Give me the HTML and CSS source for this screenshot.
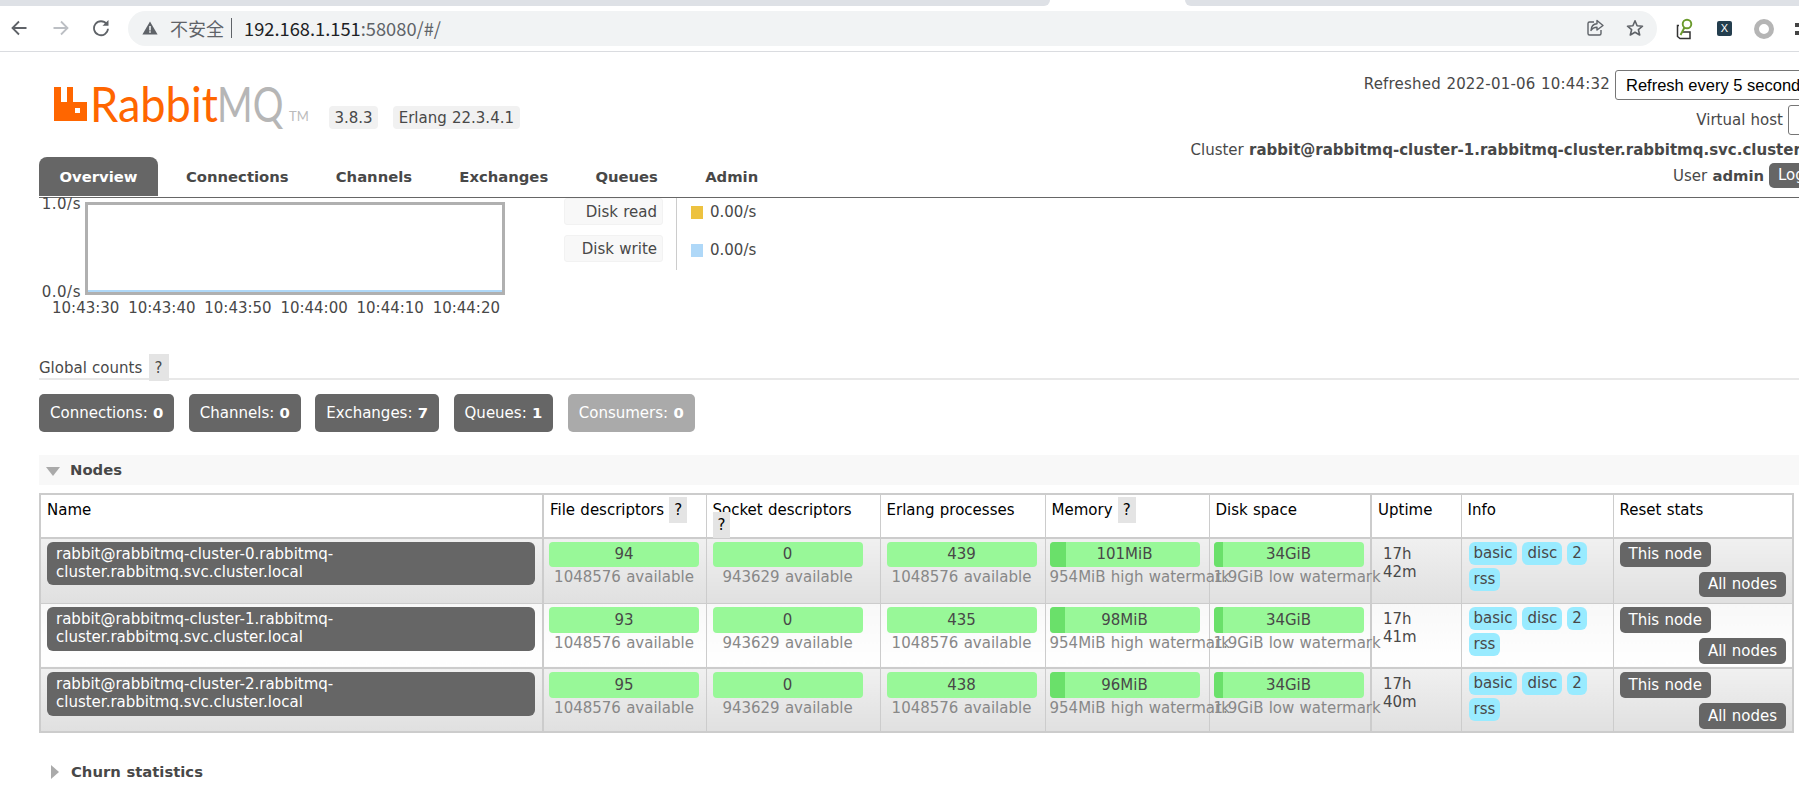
FILE: index.html
```html
<!DOCTYPE html>
<html lang="en">
<head>
<meta charset="utf-8">
<title>RabbitMQ Management</title>
<link rel="stylesheet" href="styles.css">
</head>
<body>
<div class="tabstrip"><div class="strip-left"></div><div class="strip-active"></div><div class="strip-right"></div></div>
<div class="toolbar">
  <svg class="tool back" viewBox="0 0 18 18"><path d="M16.5 9H2.5M9 2.5L2.5 9L9 15.5" fill="none" stroke="#5f6368" stroke-width="1.8"/></svg>
  <svg class="tool fwd" viewBox="0 0 18 18"><path d="M1.5 9H15.5M9 2.5L15.5 9L9 15.5" fill="none" stroke="#bcbfc4" stroke-width="1.8"/></svg>
  <svg class="tool reload" viewBox="0 0 18 18"><path d="M14.6 5A7 7 0 1 0 16 9.8" fill="none" stroke="#5f6368" stroke-width="1.8"/><path d="M10.5 6.8H16.5V1z" fill="#5f6368"/></svg>
  <div class="omnibox">
    <svg class="warn" viewBox="0 0 16 14"><path d="M8 0.5L15.6 13.5H0.4z" fill="#5f6368"/><path d="M7.2 5h1.6v4.4H7.2zM7.2 10.2h1.6v1.6H7.2z" fill="#f1f3f4"/></svg>
    <span class="insecure">不安全</span><span class="sep"></span>
    <span class="url">192.168.1.151<span class="url-dim">:58080/#/</span></span>
    <svg class="share" viewBox="0 0 18 18"><path d="M8 3H3.5A1.5 1.5 0 0 0 2 4.500V14.500A1.500 1.500 0 0 0 3.500 16H13.500A1.500 1.500 0 0 0 15 14.500V11" fill="none" stroke="#5f6368" stroke-width="1.4"/><path d="M11 1.500L17 6.500L11 11V8.200C8 8.200 6.200 9.200 5 11.500C5.200 7.800 7.500 5 11 4.800z" fill="none" stroke="#5f6368" stroke-width="1.400" stroke-linejoin="round"/></svg>
    <svg class="star" viewBox="0 0 18 18"><path d="M9 1.800L11.100 6.800L16.500 7.200L12.400 10.700L13.700 16L9 13.200L4.300 16L5.600 10.700L1.500 7.200L6.900 6.800z" fill="none" stroke="#5f6368" stroke-width="1.600" stroke-linejoin="round"/></svg>
  </div>
  <svg class="ext ext-key" viewBox="0 0 18 22"><path d="M3 7.500H1.500V18.500L4 20.500H14V14H6" fill="none" stroke="#333" stroke-width="1.500"/><circle cx="11" cy="6" r="4.300" fill="none" stroke="#6a9a2c" stroke-width="1.900"/><path d="M8.500 9.500L4.500 17" stroke="#6a9a2c" stroke-width="1.900"/></svg>
  <div class="ext-x">X</div>
  <div class="ext-ring"></div>
  <div class="kebab"><i></i><i></i></div>
</div>

<div class="page">
  <header class="header">
    <div class="header-left">
      <div class="logo">
        <svg class="logo-mark" viewBox="0 0 33 34"><path fill-rule="evenodd" d="M0 0H7V15H13V0H19V15H33V34H0zM21 21V26H26V21z" fill="#ff6600"/></svg>
        <span class="logo-rabbit">Rabbit</span><span class="logo-mq">MQ</span><span class="logo-tm">TM</span>
        <span class="badge badge-first">3.8.3</span>
        <span class="badge">Erlang 22.3.4.1</span>
      </div>
      <nav class="tabs">
        <a class="tab tab-on">Overview</a>
        <a class="tab">Connections</a>
        <a class="tab">Channels</a>
        <a class="tab">Exchanges</a>
        <a class="tab">Queues</a>
        <a class="tab">Admin</a>
      </nav>
    </div>
    <div class="header-right">
      <div class="hline hline-refresh">Refreshed 2022-01-06 10:44:32
        <select class="sel sel-refresh"><option>Refresh every 5 seconds</option></select>
      </div>
      <div class="hline hline-vhost">Virtual host
        <select class="sel sel-vhost"><option>All</option></select>
      </div>
      <div class="hline hline-cluster"><span>Cluster <b>rabbit@rabbitmq-cluster-1.rabbitmq-cluster.rabbitmq.svc.cluster.local</b></span></div>
      <div class="hline hline-user"><span>User <b>admin</b></span> <span class="logout">Log out</span></div>
    </div>
  </header>

  <section class="rates">
    <div class="chart">
      <div class="plot-row">
        <div class="yaxis"><span>1.0/s</span><span>0.0/s</span></div>
        <div class="plot"><div class="plot-line"></div></div>
      </div>
      <div class="xaxis"><span>10:43:30</span><span>10:43:40</span><span>10:43:50</span><span>10:44:00</span><span>10:44:10</span><span>10:44:20</span></div>
    </div>
    <div class="legend">
      <div class="legend-labels">
        <div class="legend-name">Disk read</div>
        <div class="legend-name">Disk write</div>
      </div>
      <div class="legend-values">
        <div class="legend-val"><i class="swatch swatch-read"></i>0.00/s</div>
        <div class="legend-val"><i class="swatch swatch-write"></i>0.00/s</div>
      </div>
    </div>
  </section>

  <h3 class="counts-head">Global counts <span class="help">?</span></h3>
  <div class="counts">
    <div class="count">Connections: <b>0</b></div>
    <div class="count">Channels: <b>0</b></div>
    <div class="count">Exchanges: <b>7</b></div>
    <div class="count">Queues: <b>1</b></div>
    <div class="count count-off">Consumers: <b>0</b></div>
  </div>

  <h2 class="section-bar"><i class="tri-down"></i>Nodes</h2>
  <table class="nodes">
    <colgroup>
      <col class="c-name"><col class="c-fd"><col class="c-sd"><col class="c-ep"><col class="c-mem"><col class="c-disk"><col class="c-up"><col class="c-info"><col class="c-reset">
    </colgroup>
    <thead>
      <tr>
        <th>Name</th>
        <th>File descriptors <span class="help">?</span></th>
        <th>Socket descriptors<br><span class="help">?</span></th>
        <th>Erlang processes</th>
        <th>Memory <span class="help">?</span></th>
        <th class="b-thick">Disk space</th>
        <th>Uptime</th>
        <th>Info</th>
        <th>Reset stats</th>
      </tr>
    </thead>
    <tbody>
      <tr class="row-alt">
        <td class="b-thick"><div class="node-name">rabbit@rabbitmq-cluster-0.rabbitmq-<br>cluster.rabbitmq.svc.cluster.local</div></td>
        <td><div class="bar">94</div><div class="sub">1048576 available</div></td>
        <td><div class="bar">0</div><div class="sub">943629 available</div></td>
        <td><div class="bar">439</div><div class="sub">1048576 available</div></td>
        <td><div class="bar bar-mem"><i class="fill fill-101"></i><span>101MiB</span></div><div class="sub">954MiB high watermark</div></td>
        <td class="b-thick"><div class="bar bar-mem"><i class="fill fill-disk"></i><span>34GiB</span></div><div class="sub">1.9GiB low watermark</div></td>
        <td class="uptime">17h<br>42m</td>
        <td class="info"><span class="tag">basic</span><span class="tag">disc</span><span class="tag">2</span><span class="tag">rss</span></td>
        <td><span class="btn">This node</span><span class="btn btn-right">All nodes</span></td>
      </tr>
      <tr class="row-plain">
        <td class="b-thick"><div class="node-name">rabbit@rabbitmq-cluster-1.rabbitmq-<br>cluster.rabbitmq.svc.cluster.local</div></td>
        <td><div class="bar">93</div><div class="sub">1048576 available</div></td>
        <td><div class="bar">0</div><div class="sub">943629 available</div></td>
        <td><div class="bar">435</div><div class="sub">1048576 available</div></td>
        <td><div class="bar bar-mem"><i class="fill fill-98"></i><span>98MiB</span></div><div class="sub">954MiB high watermark</div></td>
        <td class="b-thick"><div class="bar bar-mem"><i class="fill fill-disk"></i><span>34GiB</span></div><div class="sub">1.9GiB low watermark</div></td>
        <td class="uptime">17h<br>41m</td>
        <td class="info"><span class="tag">basic</span><span class="tag">disc</span><span class="tag">2</span><span class="tag">rss</span></td>
        <td><span class="btn">This node</span><span class="btn btn-right">All nodes</span></td>
      </tr>
      <tr class="row-alt row-last">
        <td class="b-thick"><div class="node-name">rabbit@rabbitmq-cluster-2.rabbitmq-<br>cluster.rabbitmq.svc.cluster.local</div></td>
        <td><div class="bar">95</div><div class="sub">1048576 available</div></td>
        <td><div class="bar">0</div><div class="sub">943629 available</div></td>
        <td><div class="bar">438</div><div class="sub">1048576 available</div></td>
        <td><div class="bar bar-mem"><i class="fill fill-98"></i><span>96MiB</span></div><div class="sub">954MiB high watermark</div></td>
        <td class="b-thick"><div class="bar bar-mem"><i class="fill fill-disk"></i><span>34GiB</span></div><div class="sub">1.9GiB low watermark</div></td>
        <td class="uptime">17h<br>40m</td>
        <td class="info"><span class="tag">basic</span><span class="tag">disc</span><span class="tag">2</span><span class="tag">rss</span></td>
        <td><span class="btn">This node</span><span class="btn btn-right">All nodes</span></td>
      </tr>
    </tbody>
  </table>

  <h2 class="churn"><i class="tri-right"></i>Churn statistics</h2>
</div>
</body>
</html>
```

FILE: styles.css
```css
* { box-sizing: border-box; }
html, body { margin: 0; height: 791px; overflow: hidden; background: #fff; }
body { font-family: "DejaVu Sans", Verdana, sans-serif; font-size: 15px; word-spacing: 0.5px; color: #484848; width: 1799px; }
b { font-size: 14.8px; }

/* browser chrome */
.tabstrip { display: flex; height: 6px; }
.strip-left { width: 1050px; background: #dee1e6; border-bottom-right-radius: 6px; }
.strip-active { width: 135px; background: #fff; }
.strip-right { flex: 1; background: #dee1e6; border-bottom-left-radius: 6px; }
.toolbar { display: flex; align-items: center; height: 46px; border-bottom: 1px solid #dadce0; background: #fff; position: relative; }
.tool { width: 18px; height: 18px; flex: none; margin-top: -1px; }
.back { margin-left: 10px; }
.fwd { margin-left: 24px; }
.reload { margin-left: 22px; }
.omnibox { display: flex; align-items: center; width: 1529px; height: 35px; margin-left: 18px; margin-top: -1px; border-radius: 18px; background: #f1f3f4; flex: none; font-family: "Noto Sans CJK SC", "Noto Sans", sans-serif; font-size: 18.300px; word-spacing: 0; }
.warn { width: 16px; height: 14px; margin-left: 14px; flex: none; }
.insecure { margin-left: 12px; color: #5f6368; width: 54px; white-space: nowrap; font-size: 18px; }
.sep { width: 1px; height: 20px; background: #5f6368; margin-left: 7px; }
.url { margin-left: 12px; color: #202124; flex: 1; }
.url-dim { color: #5f6368; }
.share { width: 18px; height: 18px; margin-right: 22px; flex: none; }
.star { width: 18px; height: 18px; margin-right: 13px; flex: none; }
.ext { flex: none; }
.ext-key { width: 18px; height: 22px; margin-left: 19px; }
.ext-x { width: 15px; height: 15px; margin-left: 23px; border-radius: 2px; background: #243e4e; color: #fff; font: 11px/15px "Liberation Sans", sans-serif; text-align: center; flex: none; }
.ext-ring { width: 20px; height: 20px; margin-left: 22px; border: 5px solid #b5b5b5; border-radius: 50%; flex: none; }
.kebab { margin-left: 21px; display: flex; flex-direction: column; gap: 4px; flex: none; }
.kebab i { display: block; width: 4px; height: 4px; background: #444; }

/* page header */
.page { width: 1840px; padding-left: 39px; }
.header { display: flex; justify-content: space-between; align-items: stretch; height: 146px; border-bottom: 1px solid #666; }
.header-left { display: flex; flex-direction: column; }
.logo { display: flex; align-items: flex-start; height: 105px; padding-top: 35px; padding-left: 15px; }
.logo-mark { width: 33px; height: 34px; flex: none; }
.logo-rabbit, .logo-mq { display: block; flex: none; font-family: "Lato", sans-serif; font-weight: 400; font-size: 48px; line-height: 34px; word-spacing: 0; white-space: nowrap; transform-origin: left center; }
.logo-rabbit { color: #ff6600; margin-left: 3px; width: 126px; transform: scaleX(0.94); }
.logo-mq { color: #b6b6b6; margin-left: 1px; width: 69px; transform: scaleX(0.8); }
.logo-tm { flex: none; color: #bbb; font-family: "Lato", sans-serif; font-size: 13px; line-height: 14px; margin: 22px 0 0 3px; width: 19px; }
.badge { height: 23px; padding: 0 5.500px; margin: 19px 0 0 15px; background: #f1f1f1; border-radius: 4px; line-height: 24px; white-space: nowrap; }
.badge-first { margin-left: 21px; }
.tabs { display: flex; height: 39px; }
.tab { display: block; padding: 0 23.600px; line-height: 39px; font-weight: bold; font-size: 14.800px; color: #484848; white-space: nowrap; }
.tab-on { background: #666; color: #fff; border-radius: 8px 8px 0 0; width: 119px; padding: 0; text-align: center; margin-right: 4.400px; }
.header-right { display: flex; flex-direction: column; align-items: flex-end; padding-top: 18px; white-space: nowrap; }
.hline { display: flex; align-items: center; justify-content: flex-end; gap: 5px; }
.hline-refresh { height: 30px; padding-bottom: 3px; letter-spacing: 0.2px; }
.hline-refresh .sel { margin-bottom: -3px; }
.hline-vhost { height: 30px; margin-top: 5px; }
.hline-cluster { height: 16px; margin-top: 7px; margin-right: -4px; }
.hline-user { height: 25px; margin-top: 5px; }
.hline-cluster b { font-size: 15px; }
.sel { height: 30px; background: #fff; border: 1px solid #767676; border-radius: 3px; color: #000; font: 16.500px "Liberation Sans", sans-serif; padding-left: 6px; word-spacing: 0; }
.sel-refresh { width: 225px; }
.sel-vhost { width: 52px; height: 30px; }
.logout { display: block; width: 71px; height: 25px; line-height: 25px; padding-left: 9px; border-radius: 5px; background: #666; color: #fff; }

/* chart + legend */
.rates { display: flex; height: 157px; }
.chart { width: 466px; }
.plot-row { display: flex; padding-top: 4px; height: 97px; }
.yaxis { display: flex; flex-direction: column; justify-content: space-between; width: 42px; margin-top: -6px; margin-bottom: -5px; line-height: 16px; text-align: right; letter-spacing: 0.5px; }
.plot { width: 420px; height: 93px; margin-left: 4px; border: 3px solid #b0b0b0; position: relative; background: #fff; }
.plot-line { position: absolute; left: 0; right: 0; bottom: 0; height: 2px; background: #afd8f8; }
.xaxis { display: flex; justify-content: space-between; width: 448px; margin: 5px 0 0 13px; line-height: 16px; }
.legend { display: flex; margin-left: 59px; height: 72px; }
.legend-labels { display: flex; flex-direction: column; gap: 10px; padding-top: 0; width: 113px; border-right: 1px solid #ccc; }
.legend-name { width: 99px; height: 27px; line-height: 27px; text-align: right; padding-right: 5px; background: #f8f8f8; border: 1px solid #f2f2f2; border-radius: 3px; }
.legend-values { padding: 6px 0 0 14px; }
.legend-val { display: flex; align-items: center; height: 16px; margin-bottom: 22px; }
.swatch { display: block; width: 12px; height: 13px; margin-right: 7px; }
.swatch-read { background: #edc240; }
.swatch-write { background: #afd8f8; }

/* global counts */
.counts-head { margin: 0; height: 25px; font-weight: normal; font-size: 15px; line-height: 26px; border-bottom: 2px solid #e8e8e8; padding-top: 0; }
.help { background: #e4e4e4; padding: 4px 5px; }
.counts-head .help { padding: 5px 6px 4px; margin-left: 1px; }
.counts { display: flex; gap: 14.500px; margin-top: 14px; }
.count { height: 38px; line-height: 38px; padding: 0 11px; border-radius: 5px; background: #666; color: #fff; white-space: nowrap; }
.count-off { background: #aaa; }

/* nodes */
.section-bar { margin: 23px 0 0; height: 30px; line-height: 30px; background: #f8f8f8; font-size: 14.800px; font-weight: bold; display: flex; align-items: center; }
.tri-down { width: 0; height: 0; border-left: 7.500px solid transparent; border-right: 7.500px solid transparent; border-top: 9px solid #aaa; margin: 2px 10px 0 7px; }
.nodes { table-layout: fixed; width: 1753px; margin-top: 8px; border-collapse: collapse; border: 2px solid #ccc; }
.c-name { width: 503px; } .c-fd { width: 163px; } .c-sd { width: 174px; } .c-ep { width: 165px; } .c-mem { width: 164px; }
.c-disk { width: 162px; } .c-up { width: 90px; } .c-info { width: 152px; } .c-reset { width: 180px; }
.nodes th { height: 44px; vertical-align: top; text-align: left; font-weight: normal; color: #000; padding: 8px 6px 0 6px; line-height: 15px; border-right: 1px solid #ccc; border-bottom: 2px solid #ccc; }
.nodes td { height: 65px; vertical-align: top; padding: 3px 6px 0; border-right: 1px solid #ccc; border-bottom: 1px solid #ccc; white-space: nowrap; }
.nodes tr.row-last td { height: 64px; }
.nodes th:first-child { border-right-width: 2px; }
.nodes th.b-thick, .nodes td.b-thick { border-right-width: 2px; }
.nodes td:nth-child(2) { padding-left: 5px; }
.nodes td:nth-child(5), .nodes td:nth-child(6) { padding-left: 4px; }
.row-alt td { background: linear-gradient(#f0f0f0, #e0e0e0); }
.row-plain td { background: linear-gradient(#f8f8f8, #fff); border-bottom: 2px solid #ccc; }
.node-name { width: 488px; height: 43px; padding: 3px 9px 0; border-radius: 6px; background: #666; color: #fff; line-height: 18px; }
.row-plain .node-name, .row-last .node-name { height: 44px; }
.bar { position: relative; width: 150px; height: 25px; line-height: 25px; text-align: center; background: #98f898; border-radius: 4px; overflow: hidden; }
.row-plain .bar, .row-last .bar { height: 26px; line-height: 26px; }
.bar-mem span { position: relative; }
.fill { position: absolute; left: 0; top: 0; bottom: 0; background: #6ae06a; }
.fill-101 { width: 16px; } .fill-98 { width: 15px; } .fill-disk { width: 9px; }
.sub { color: #888; text-align: center; line-height: 19px; margin-top: 1px; width: 150px; }
.nodes td:nth-child(5) .sub, .nodes td:nth-child(6) .sub { position: relative; z-index: 1; }
.nodes td.uptime { padding-left: 11px; line-height: 18px; padding-top: 6px; }
.nodes td.info { white-space: normal; line-height: 0; padding-left: 7px; padding-right: 4px; }
.tag { display: inline-block; height: 23px; line-height: 22px; padding: 0 5px; margin: 0 5px 3px 0; border-radius: 6px; background: #99ebff; }
.btn { display: block; width: max-content; height: 25px; line-height: 25px; padding: 0 9px; border-radius: 5px; background: #666; color: #fff; }
.row-plain .btn, .row-last .btn { height: 26px; line-height: 26px; }
.btn-right { margin: 5px 0 0 auto; }

.churn { margin: 29px 0 0; height: 20px; font-size: 14.800px; line-height: 20px; font-weight: bold; display: flex; align-items: center; }
.tri-right { width: 0; height: 0; border-top: 7.500px solid transparent; border-bottom: 7.500px solid transparent; border-left: 8px solid #aaa; margin: 0 12px 0 12px; }
```
